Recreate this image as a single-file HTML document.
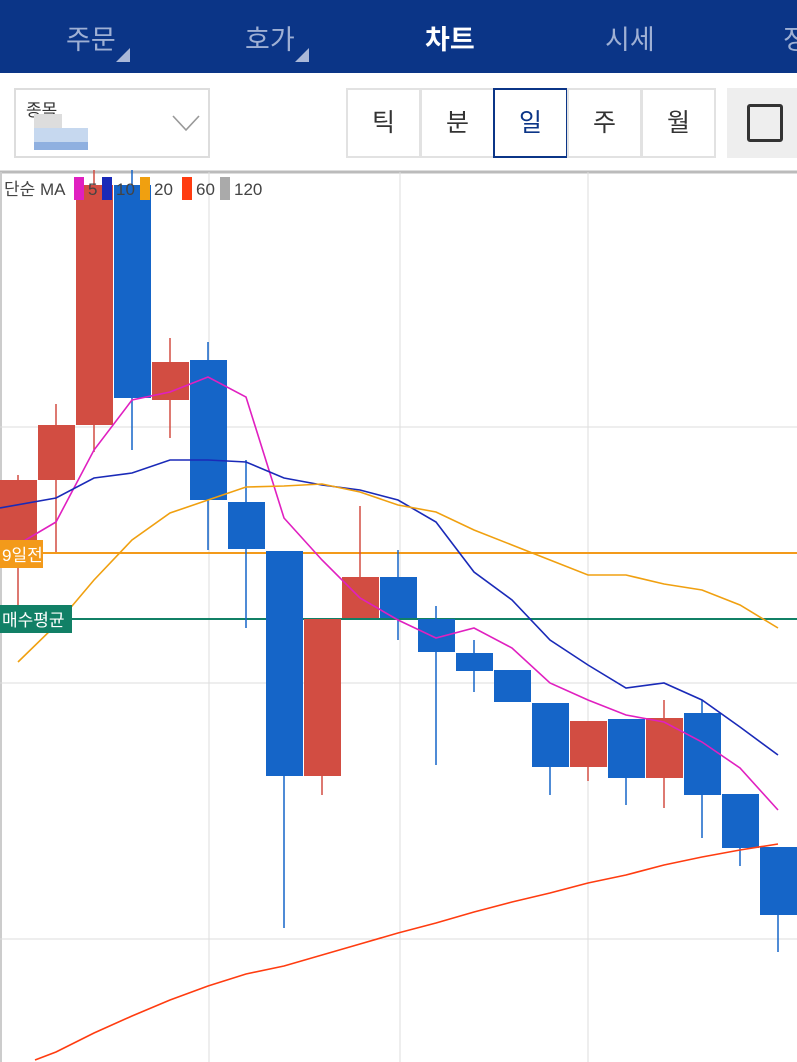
<!DOCTYPE html><html><head><meta charset="utf-8"><style>
body{margin:0;width:797px;height:1062px;overflow:hidden;background:#fff;font-family:"Liberation Sans","Noto Sans CJK KR",sans-serif;position:relative}
.top{position:absolute;left:0;top:0;width:797px;height:73px;background:#0b3587}
.t{position:absolute;top:18px;font-size:27px;color:#9fb0d4}
.tri{position:absolute;top:48px;width:0;height:0;border-left:14px solid transparent;border-bottom:14px solid #aab8d8}
.sel{position:absolute;left:14px;top:88px;width:192px;height:66px;border:2px solid #ddd;background:#fff}
.seg{position:absolute;top:88px;height:66px;width:71px;border:2px solid #e2e2e2;text-align:center;line-height:66px;font-size:25px;color:#333;box-sizing:content-box}
</style></head><body>
<div class="top"></div>
<div class="t" style="left:66px">주문</div><div class="tri" style="left:116px"></div>
<div class="t" style="left:245px">호가</div><div class="tri" style="left:295px"></div>
<div class="t" style="left:425px;color:#fff;font-weight:bold">차트</div>
<div class="t" style="left:605px">시세</div>
<div class="t" style="left:783px">정</div>
<div class="sel"><div style="position:absolute;left:10px;top:6px;font-size:17px;color:#333">종목</div>
<div style="position:absolute;left:18px;top:24px;width:28px;height:14px;background:#ddd"></div>
<div style="position:absolute;left:18px;top:38px;width:54px;height:14px;background:#c6d8ef"></div>
<div style="position:absolute;left:18px;top:52px;width:54px;height:8px;background:#8fb0e0"></div>
<svg style="position:absolute;left:156px;top:24px" width="28" height="18"><path d="M1 2 L14 16 L27 2" stroke="#999" stroke-width="1.6" fill="none"/></svg></div>
<div class="seg" style="left:346px">틱</div>
<div class="seg" style="left:420px">분</div>
<div class="seg" style="left:493px;border-color:#0b3587;color:#0b3587">일</div>
<div class="seg" style="left:567px">주</div>
<div class="seg" style="left:641px">월</div>
<div style="position:absolute;left:727px;top:88px;width:70px;height:70px;background:#eee"><div style="position:absolute;left:20px;top:16px;width:30px;height:32px;border:3px solid #333;border-radius:3px"></div></div>
<svg style="position:absolute;left:0;top:170px" width="797" height="892" viewBox="0 170 797 892">
<line x1="0" y1="172" x2="797" y2="172" stroke="#bbb" stroke-width="3"/>
<line x1="1" y1="172" x2="1" y2="1062" stroke="#ccc" stroke-width="2"/>
<g stroke="#ddd" stroke-width="1"><line x1="209" y1="172" x2="209" y2="1062"/><line x1="400" y1="172" x2="400" y2="1062"/><line x1="588" y1="172" x2="588" y2="1062"/>
<line x1="0" y1="427" x2="797" y2="427"/><line x1="0" y1="683" x2="797" y2="683"/><line x1="0" y1="939" x2="797" y2="939"/></g>
<line x1="0" y1="553" x2="797" y2="553" stroke="#f39a1a" stroke-width="2"/>
<line x1="0" y1="619" x2="797" y2="619" stroke="#118066" stroke-width="2"/>
<g stroke-width="1.5">
<line x1="18" y1="475" x2="18" y2="605" stroke="#d24d42"/><rect x="0" y="480" width="37" height="60" fill="#d24d42"/>
<line x1="56" y1="404" x2="56" y2="552" stroke="#d24d42"/><rect x="38" y="425" width="37" height="55" fill="#d24d42"/>
<line x1="94" y1="170" x2="94" y2="452" stroke="#d24d42"/><rect x="76" y="185" width="37" height="240" fill="#d24d42"/>
<line x1="132" y1="170" x2="132" y2="450" stroke="#1565c8"/><rect x="114" y="185" width="37" height="213" fill="#1565c8"/>
<line x1="170" y1="338" x2="170" y2="438" stroke="#d24d42"/><rect x="152" y="362" width="37" height="38" fill="#d24d42"/>
<line x1="208" y1="342" x2="208" y2="550" stroke="#1565c8"/><rect x="190" y="360" width="37" height="140" fill="#1565c8"/>
<line x1="246" y1="460" x2="246" y2="628" stroke="#1565c8"/><rect x="228" y="502" width="37" height="47" fill="#1565c8"/>
<line x1="284" y1="551" x2="284" y2="928" stroke="#1565c8"/><rect x="266" y="551" width="37" height="225" fill="#1565c8"/>
<line x1="322" y1="619" x2="322" y2="795" stroke="#d24d42"/><rect x="304" y="619" width="37" height="157" fill="#d24d42"/>
<line x1="360" y1="506" x2="360" y2="618" stroke="#d24d42"/><rect x="342" y="577" width="37" height="41" fill="#d24d42"/>
<line x1="398" y1="550" x2="398" y2="640" stroke="#1565c8"/><rect x="380" y="577" width="37" height="41" fill="#1565c8"/>
<line x1="436" y1="606" x2="436" y2="765" stroke="#1565c8"/><rect x="418" y="619" width="37" height="33" fill="#1565c8"/>
<line x1="474" y1="640" x2="474" y2="692" stroke="#1565c8"/><rect x="456" y="653" width="37" height="18" fill="#1565c8"/>
<rect x="494" y="670" width="37" height="32" fill="#1565c8"/>
<line x1="550" y1="703" x2="550" y2="795" stroke="#1565c8"/><rect x="532" y="703" width="37" height="64" fill="#1565c8"/>
<line x1="588" y1="721" x2="588" y2="781" stroke="#d24d42"/><rect x="570" y="721" width="37" height="46" fill="#d24d42"/>
<line x1="626" y1="719" x2="626" y2="805" stroke="#1565c8"/><rect x="608" y="719" width="37" height="59" fill="#1565c8"/>
<line x1="664" y1="700" x2="664" y2="808" stroke="#d24d42"/><rect x="646" y="718" width="37" height="60" fill="#d24d42"/>
<line x1="702" y1="700" x2="702" y2="838" stroke="#1565c8"/><rect x="684" y="713" width="37" height="82" fill="#1565c8"/>
<line x1="740" y1="794" x2="740" y2="866" stroke="#1565c8"/><rect x="722" y="794" width="37" height="54" fill="#1565c8"/>
<line x1="778" y1="847" x2="778" y2="952" stroke="#1565c8"/><rect x="760" y="847" width="37" height="68" fill="#1565c8"/>
</g>
<g fill="none" stroke-width="1.6">
<polyline stroke="#e020c0" points="0,555 56,522 94,450 132,400 170,392 208,377 246,397 284,518 322,560 360,598 398,620 436,638 474,628 512,648 550,683 588,700 626,715 664,722 702,742 740,768 778,810"/>
<polyline stroke="#1a2ab8" points="0,508 56,498 94,478 132,473 170,460 208,460 246,462 284,478 322,485 360,490 398,500 436,522 474,572 512,600 550,640 588,665 626,688 664,683 702,700 740,727 778,755"/>
<polyline stroke="#f0a010" points="18,662 56,625 94,580 132,540 170,513 208,500 246,487 284,486 322,484 360,492 398,505 436,512 474,530 512,545 550,560 588,575 626,575 664,584 702,590 740,605 778,628"/>
<polyline stroke="#ff3c10" points="35,1060 56,1052 94,1033 132,1016 170,1000 208,986 246,974 284,966 322,955 360,944 398,933 436,923 474,912 512,902 550,893 588,883 626,875 664,865 702,857 740,850 778,844"/>
</g>
<rect x="0" y="540" width="43" height="28" fill="#f39a1a"/><text x="2" y="561" font-size="17" fill="#fff" font-family="Liberation Sans,Noto Sans CJK KR,sans-serif">9일전</text>
<rect x="0" y="605" width="72" height="28" fill="#118066"/><text x="2" y="626" font-size="17" fill="#fff" font-family="Liberation Sans,Noto Sans CJK KR,sans-serif">매수평균</text>
<g font-size="17" fill="#444" font-family="Liberation Sans,Noto Sans CJK KR,sans-serif">
<text x="4" y="195">단순 MA</text>
<rect x="74" y="177" width="10" height="23" fill="#e020c0"/><text x="88" y="195">5</text>
<rect x="102" y="177" width="10" height="23" fill="#1a2ab8"/><text x="116" y="195">10</text>
<rect x="140" y="177" width="10" height="23" fill="#f0a010"/><text x="154" y="195">20</text>
<rect x="182" y="177" width="10" height="23" fill="#ff3c10"/><text x="196" y="195">60</text>
<rect x="220" y="177" width="10" height="23" fill="#aaa"/><text x="234" y="195">120</text></g>
</svg>
</body></html>
